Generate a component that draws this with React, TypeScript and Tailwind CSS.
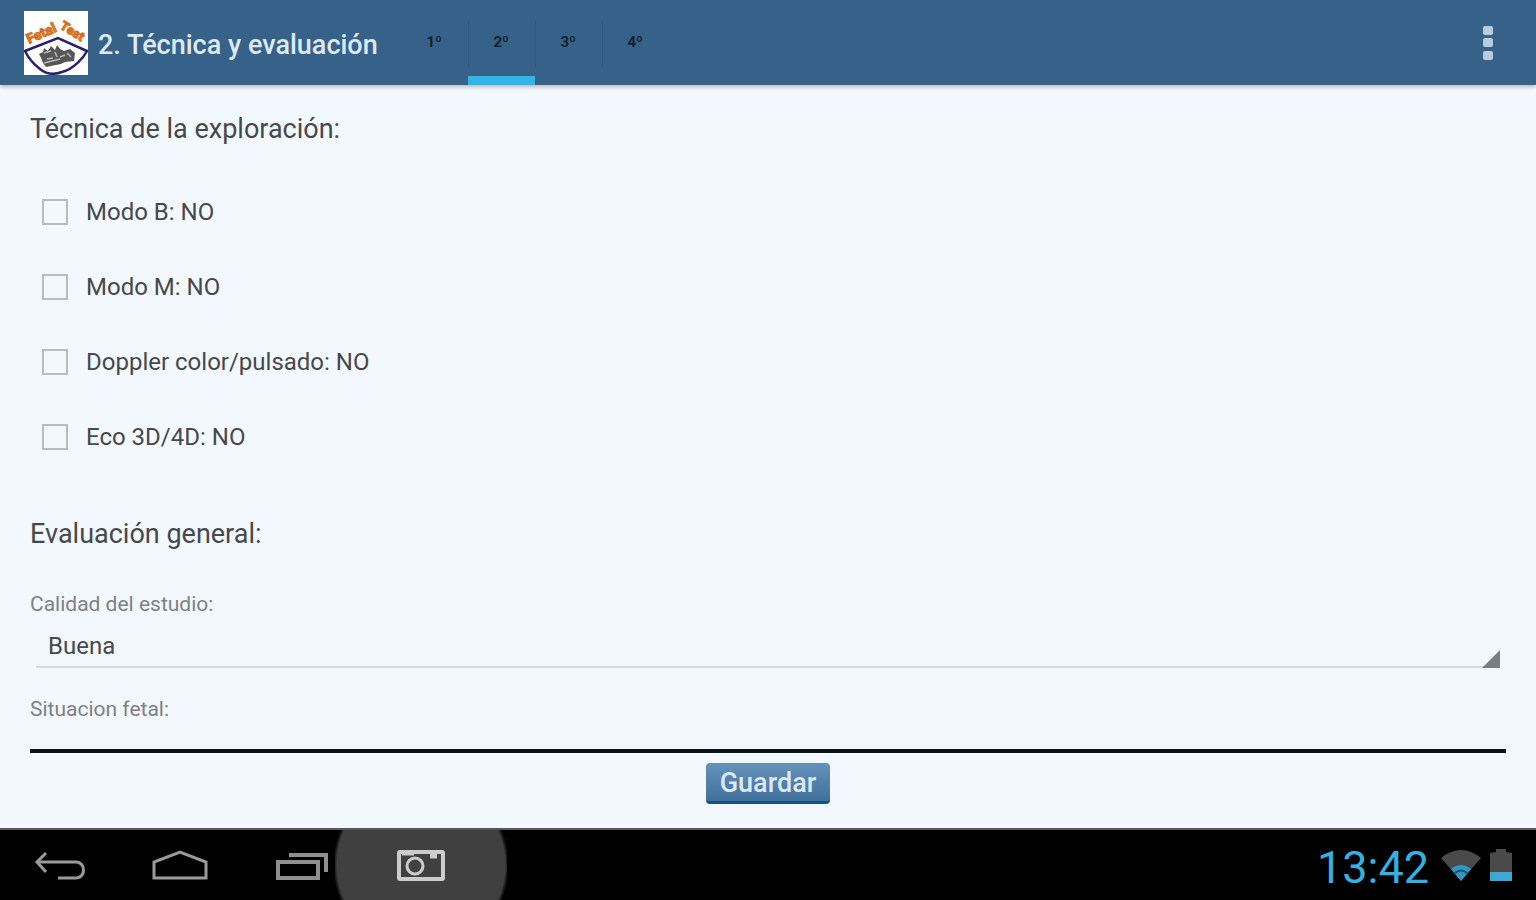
import { useState } from "react";

const TABS = ["1º", "2º", "3º", "4º"];

const TECHNIQUES = ["Modo B", "Modo M", "Doppler color/pulsado", "Eco 3D/4D"];

function AppLogo() {
  return (
    <svg viewBox="0 0 64 64" className="size-16 shrink-0 bg-white" role="img" aria-label="Fetal Test">
      <path
        d="M1 40 L34 27 L63 40 C60 46 50 58 38 61 C30 64 22 63 16 58 C8 52 4 46 1 40 Z"
        fill="#fff"
        stroke="#2b2070"
        strokeWidth="2.5"
      />
      <g fontFamily="Roboto, sans-serif" fontWeight="900" fill="#ee7d1c" stroke="#c96a20" strokeWidth="0.8">
        <text x="5" y="33" fontSize="14" transform="rotate(-24 5 33)">
          Fetal
        </text>
        <text x="35" y="17" fontSize="13" transform="rotate(32 35 17)">
          Test
        </text>
      </g>
      <path d="M15 43 l4 -2 1 -4 4 3 3 -5 4 4 2 -5 3 4 4 2 6 -2 5 4 -1 8 -9 1 -4 2 -15 3 -3 -4 -2 -5 Z" fill="#565656" />
      <path
        d="M20 42 l7 -2 M23 48 l6 -1 M31 41 l2 5 M36 46 l5 -2 M43 42 l4 4 M20 52 l16 -4"
        stroke="#b9b9b9"
        strokeWidth="1.5"
        fill="none"
      />
    </svg>
  );
}

function Header({ active, onSelect }: { active: number; onSelect: (i: number) => void }) {
  return (
    <header className="relative flex h-[85px] shrink-0 items-stretch bg-[#366188] pl-6 shadow-[0_1px_5px_rgba(0,0,0,0.35)]">
      <div className="flex items-center gap-[10px]">
        <AppLogo />
        <h1 className="pt-1 text-[27px] leading-9 font-medium whitespace-nowrap text-[#dde9f4]">
          2. Técnica y evaluación
        </h1>
      </div>
      <nav className="ml-[23px] flex">
        {TABS.map((tab, i) => (
          <button
            key={tab}
            type="button"
            aria-pressed={i === active}
            onClick={() => onSelect(i)}
            className={`relative w-[67px] border-b-[9px] pt-2 text-[15px] font-bold text-[#14212c] ${
              i === active ? "border-[#2fb6e8]" : "border-transparent"
            }`}
          >
            {tab}
            {i > 0 && <span className="absolute top-5 left-0 h-12 w-px bg-[#315a80]" />}
          </button>
        ))}
      </nav>
      <button type="button" aria-label="Más opciones" className="ml-auto flex w-24 items-center justify-center">
        <svg viewBox="0 0 12 38" className="h-[38px] w-3" fill="#b9cbdd">
          <rect x="1" y="2" width="10" height="9" rx="2" />
          <rect x="1" y="14" width="10" height="9" rx="2" />
          <rect x="1" y="27" width="10" height="9" rx="2" />
        </svg>
      </button>
    </header>
  );
}

function SystemBar() {
  return (
    <footer className="flex h-[72px] shrink-0 items-stretch overflow-hidden border-t-2 border-[#55595c] bg-black">
      <button type="button" aria-label="Atrás" className="flex w-[120px] items-center justify-center">
        <svg viewBox="0 0 52 32" className="h-8 w-[52px]" fill="none" stroke="#9a9a9a" strokeWidth="3">
          <path d="M3 13 H42 C52 13 52 29 42 29 H24" />
          <path d="M12 4 L3 13 L12 23" />
        </svg>
      </button>
      <button type="button" aria-label="Inicio" className="flex w-[120px] items-center justify-center">
        <svg viewBox="0 0 58 32" className="h-8 w-[58px]" fill="none" stroke="#9a9a9a" strokeWidth="3">
          <path d="M3 29 V13 L29 3 L55 13 V29 Z" />
        </svg>
      </button>
      <button
        type="button"
        aria-label="Aplicaciones recientes"
        className="flex w-[95px] items-center justify-end pr-[6px]"
      >
        <svg viewBox="0 0 54 32" className="h-8 w-[54px]" fill="none" stroke="#8f8f8f">
          <rect x="3" y="13" width="40" height="16" strokeWidth="4" />
          <path d="M14 6 H51 V23" strokeWidth="4" />
        </svg>
      </button>
      <button
        type="button"
        aria-label="Captura de pantalla"
        className="flex w-[172px] items-center justify-center bg-[radial-gradient(circle_at_50%_50%,#404040_84px,transparent_88px)]"
      >
        <svg viewBox="0 0 50 34" className="h-[34px] w-[50px]" fill="none" stroke="#cccccc">
          <rect x="3" y="4" width="44" height="27" rx="1" strokeWidth="4" />
          <circle cx="19" cy="18" r="8" strokeWidth="3" />
          <path d="M6 5 H18 M34 8 H41" strokeWidth="5" />
        </svg>
      </button>
      <div className="ml-auto flex items-center gap-2 pr-6">
        <time className="pt-1 pr-[3px] text-[45px] leading-none font-normal text-[#35b0e0]">13:42</time>
        <svg viewBox="0 0 42 34" className="h-[34px] w-[42px]" role="img" aria-label="Wi-Fi">
          <path d="M1 10 Q21 -6 41 10 L21 33 Z" fill="#4a4a4a" />
          <path d="M11 21 Q21 13 31 21 L21 33 Z" fill="#2d98c4" />
          <path d="M15 25 Q21 20 27 25" stroke="#15506a" strokeWidth="2" fill="none" />
        </svg>
        <svg viewBox="0 0 22 34" className="h-[34px] w-[22px]" role="img" aria-label="Batería">
          <path d="M0 5 L6 4 V1 H16 V4 L22 5 V24 H0 Z" fill="#4a4a4a" />
          <rect y="24" width="22" height="9" fill="#3aa9d6" />
        </svg>
      </div>
    </footer>
  );
}

export default function App() {
  const [tab, setTab] = useState(1);
  const [checked, setChecked] = useState<Record<string, boolean>>({});
  const [quality, setQuality] = useState("Buena");

  return (
    <div className="flex h-screen flex-col bg-[#f3f8fe] font-[Roboto,sans-serif] text-[#46494c]">
      <Header active={tab} onSelect={setTab} />

      <main className="min-h-0 flex-1 overflow-y-auto px-[30px] pt-6">
        <h2 className="text-[27px] leading-10">Técnica de la exploración:</h2>
        <div className="mt-[25px]">
          {TECHNIQUES.map((name) => (
            <label key={name} className="flex h-[75px] items-center gap-[18px] pl-3 text-2xl">
              <input
                type="checkbox"
                checked={!!checked[name]}
                onChange={(e) => setChecked({ ...checked, [name]: e.target.checked })}
                className="size-[26px] shrink-0 appearance-none border-2 border-[#b9bcbf] checked:bg-[#2fb6e8]"
              />
              <span>
                {name}: {checked[name] ? "SI" : "NO"}
              </span>
            </label>
          ))}
        </div>

        <h2 className="mt-10 text-[27px] leading-10">Evaluación general:</h2>
        <label htmlFor="quality" className="mt-[35px] block text-[21px] leading-[30px] text-[#7d8184]">
          Calidad del estudio:
        </label>
        <div className="relative mx-[6px] mt-[7px]">
          <select
            id="quality"
            value={quality}
            onChange={(e) => setQuality(e.target.value)}
            className="h-[42px] w-full appearance-none border-b-2 border-[#d5dadf] pl-3 text-2xl outline-none"
          >
            <option>Buena</option>
            <option>Regular</option>
            <option>Mala</option>
          </select>
          <svg viewBox="0 0 18 18" className="pointer-events-none absolute right-0 bottom-0 size-[18px]">
            <path d="M18 0 V18 H0 Z" fill="#7b7e80" />
          </svg>
        </div>
        <p className="mt-[26px] text-[21px] leading-[30px] text-[#7d8184]">Situacion fetal:</p>
      </main>

      <div className="mx-[30px] flex shrink-0 justify-center border-t-4 border-[#101315] pt-[10px] pb-6">
        <button
          type="button"
          className="h-[41px] rounded-sm border-b-3 border-[#164f80] bg-linear-to-b from-[#6593bb] to-[#3f709c] px-[14px] pt-[3px] text-[27px] leading-none font-medium text-[#dce8f3]"
        >
          Guardar
        </button>
      </div>

      <SystemBar />
    </div>
  );
}
